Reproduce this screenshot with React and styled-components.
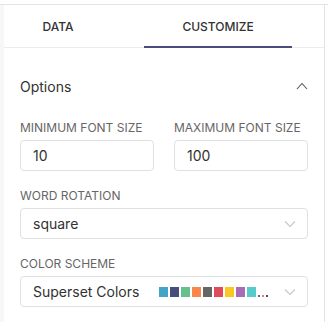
import React from "react";
import styled, { createGlobalStyle } from "styled-components";

const Global = createGlobalStyle`
  html, body { margin: 0; padding: 0; background: #fff; }
  body { font-family: Inter, "Noto Sans", sans-serif; color: #323232; }
`;

const Frame = styled.div`
  margin-top: 4px;
  border-top: 1px solid #e3e3e3;
  display: flex;
  height: 317px;
`;

const Gutter = styled.div`
  width: 4px;
  background: #f7f7f7;
`;

const Panel = styled.div`
  width: 320px;
  border-right: 1px solid #e3e3e3;
  display: flex;
  flex-direction: column;
`;

const TabBar = styled.div`
  display: flex;
  height: 42px;
  border-bottom: 1px solid #ececec;
`;

const Tab = styled.div`
  width: ${(p) => p.$w}px;
  margin-right: ${(p) => p.$mr || 0}px;
  display: flex;
  align-items: center;
  justify-content: center;
  font-size: 12px;
  font-weight: 500;
  color: #323232;
  box-sizing: border-box;
  padding-top: 1px;
  border-bottom: 2px solid ${(p) => (p.$active ? "#484d7a" : "transparent")};
  margin-bottom: -1px;
`;

const Body = styled.div`
  padding: 0 16px;
  display: flex;
  flex-direction: column;
`;

const Header = styled.div`
  margin-top: 14px;
  height: 48px;
  display: flex;
  align-items: center;
  justify-content: space-between;
  font-size: 14px;
  color: #323232;
`;

const Row = styled.div`
  display: grid;
  grid-template-columns: 1fr 1fr;
  column-gap: 20px;
  margin-top: ${(p) => p.$mt || 0}px;
`;

const Control = styled.div`
  display: flex;
  flex-direction: column;
  margin-top: ${(p) => p.$mt || 0}px;
`;

const Label = styled.div`
  font-size: 12px;
  line-height: 16px;
  color: #666;
  text-transform: uppercase;
  margin-bottom: 4px;
  white-space: nowrap;
`;

const Field = styled.div`
  height: 31px;
  box-sizing: border-box;
  border: 1px solid #e0e0e0;
  border-radius: 4px;
  display: flex;
  align-items: center;
  padding: 0 11px 0 12px;
  font-size: 14px;
  color: #323232;
`;

const Value = styled.span`
  flex: 1;
  white-space: nowrap;
`;

const Swatches = styled.div`
  display: flex;
  align-items: center;
  margin-right: 16px;
  padding-top: 1px;
`;

const Swatch = styled.span`
  width: 9px;
  height: 10px;
  margin-right: 2px;
  background: ${(p) => p.$c};
`;

const Dot = styled.span`
  width: 2px;
  height: 2px;
  margin-left: ${(p) => (p.$first ? 0 : 2)}px;
  align-self: flex-end;
  background: ${(p) => p.$c};
`;

const Chevron = ({ up }) => (
  <svg width="12" height="8" viewBox="0 0 12 8" fill="none">
    {up ? (
      <path d="M1 7 L6 1.5 L11 7" stroke="#555" strokeWidth="1.1" />
    ) : (
      <path d="M1 1.5 L6 6.5 L11 1.5" stroke="#c8c8c8" strokeWidth="1.1" />
    )}
  </svg>
);

const COLORS = [
  "#41a4c8",
  "#454e7c",
  "#66c18c",
  "#fd854c",
  "#666666",
  "#df4b5a",
  "#f9c921",
  "#a86cb7",
  "#56cbcb",
];

export default function App() {
  return (
    <>
      <Global />
      <Frame>
        <Gutter />
        <Panel>
          <TabBar>
            <Tab $w={108} $mr={32}>DATA</Tab>
            <Tab $w={148} $active>CUSTOMIZE</Tab>
          </TabBar>
          <Body>
            <Header>
              <span>Options</span>
              <Chevron up />
            </Header>
            <Row $mt={10}>
              <Control>
                <Label>Minimum Font Size</Label>
                <Field>
                  <Value>10</Value>
                </Field>
              </Control>
              <Control>
                <Label>Maximum Font Size</Label>
                <Field>
                  <Value>100</Value>
                </Field>
              </Control>
            </Row>
            <Control $mt={17}>
              <Label>Word Rotation</Label>
              <Field>
                <Value>square</Value>
                <Chevron />
              </Field>
            </Control>
            <Control $mt={17}>
              <Label>Color Scheme</Label>
              <Field>
                <Value>Superset Colors</Value>
                <Swatches>
                  {COLORS.map((c) => (
                    <Swatch key={c} $c={c} />
                  ))}
                  <Dot $first $c="#5a6a8a" />
                  <Dot $c="#e08a55" />
                  <Dot $c="#454e7c" />
                </Swatches>
                <Chevron />
              </Field>
            </Control>
          </Body>
        </Panel>
      </Frame>
    </>
  );
}
